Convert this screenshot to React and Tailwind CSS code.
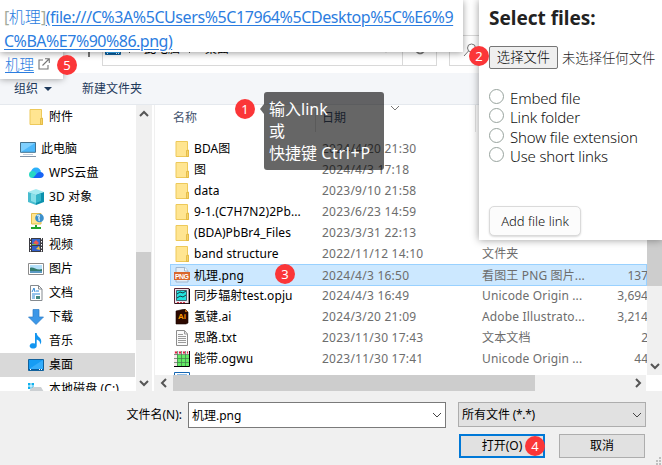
import React from "react";

const svgProps = { width: 16, height: 16, viewBox: "0 0 16 16", className: "block shrink-0" };

function FolderIcon() {
  return (
    <svg {...svgProps}>
      <path d="M2 0.5h11.500v8.500h1v6.500H2z" fill="#ffe591" stroke="#edc95a" />
      <path d="M12.500 9.500h2v6h-2z" fill="#f6d36a" stroke="#dfb63d" strokeWidth=".8" />
    </svg>
  );
}

function ComputerIcon() {
  return (
    <svg {...svgProps}>
      <path d="M.5 1.500h15v9.800H.5z" fill="#4db8fb" stroke="#44728f" />
      <path d="M1 2h14L1 11z" fill="#7fd0ff" />
      <path d="M0 15.500h16" stroke="#8193a8" />
      <path d="M3 13.500h10" stroke="#c3cedb" />
    </svg>
  );
}

function CloudIcon() {
  return (
    <svg {...svgProps}>
      <circle cx="8" cy="7.500" r="5" fill="#2cb0fa" />
      <circle cx="4.500" cy="9.500" r="3.500" fill="#27d8c4" />
      <path d="M4 13c3 0 4-6 8-6 5 0 5 6 0 6z" fill="#1764f5" />
    </svg>
  );
}

function CubeIcon() {
  return (
    <svg {...svgProps}>
      <path d="M0 3 8 0l8 3-8 3z" fill="#a4eaf1" />
      <path d="M0 3l8 3v10l-8-3z" fill="#48bccf" />
      <path d="M16 3 8 6v10l8-3z" fill="#0b91ad" />
      <path d="M3 4.200 8 6v8l-5-2z" fill="#86dfe8" />
      <path d="M8 6l5-1.800V12l-5 2z" fill="#35b5c9" />
    </svg>
  );
}

function NetworkFolderIcon() {
  return (
    <svg {...svgProps}>
      <path d="M3.500.5H13V11H3.500z" fill="#ffe591" stroke="#e3bd4c" />
      <circle cx="11.500" cy="5" r="4.300" fill="#3b8fcb" />
      <path d="M9 3c2-2 3 0 2 1s1 2 0 4" stroke="#c8e6f5" strokeWidth="1.500" fill="none" />
      <path d="M8 12v2M3 15h10" stroke="#22a42c" strokeWidth="2" />
    </svg>
  );
}

function VideoIcon() {
  return (
    <svg {...svgProps}>
      <path d="M1 1h14v14H1z" fill="#3b3b42" />
      <path d="M4 2h8v6H4z" fill="#3769d1" />
      <path d="M4 9h8v5H4z" fill="#315fc9" />
      <path d="m5 6 3-3 3 3-2 2z" fill="#ed5c4c" />
      <path d="m8 12 3-3 1 4z" fill="#f7c23c" />
      <path d="M4 7h4v1H4z" fill="#74ba4c" />
      <path d="M2.500 1v14M13.500 1v14" stroke="#fff" strokeDasharray="1.500 1.500" />
    </svg>
  );
}

function PictureIcon() {
  return (
    <svg {...svgProps}>
      <path d="M.5 2.500h15v11H.5z" fill="#fff" stroke="#8b8b8b" />
      <path d="M2 4h12v8H2z" fill="#b5e0fb" />
      <path d="M2 7c3-2 7 3 12 1v3H2z" fill="#337b6d" />
      <path d="M2 10h12v2H2z" fill="#5b99c2" />
    </svg>
  );
}

function DocumentIcon() {
  return (
    <svg {...svgProps}>
      <path d="M2.500.5h8L14 4v11.500H2.500z" fill="#fff" stroke="#858a8f" />
      <path d="M10.500.5V4H14" fill="none" stroke="#858a8f" />
      <path d="M4 7 6 3l1 4M8 6h3M4 9h8M4 11h3M4 13h3" stroke="#2b88d8" fill="none" />
      <path d="M8 11h4v3H8z" fill="#458a80" />
    </svg>
  );
}

function DownloadIcon() {
  return (
    <svg {...svgProps}>
      <path d="M5 .5h6V8h4.500L8 15.500.5 8H5z" fill="#3b97e8" stroke="#2b7dc5" strokeWidth=".7" />
    </svg>
  );
}

function MusicIcon() {
  return (
    <svg {...svgProps}>
      <path d="M7 0h1.700c0 4 5 4 4.500 9-.1 1-.6 2-1.200 2.500C12.700 8 10 7 8.700 6.500V13A3.500 2.700 0 1 1 7 10.600z" fill="#1395f0" />
    </svg>
  );
}

function DesktopIcon() {
  return (
    <svg {...svgProps}>
      <path d="M.5 2.500h15v11H.5z" fill="#159cf4" stroke="#11619c" />
      <path d="M1 12 15 3v10H1z" fill="#35adfb" />
      <path d="M1 12.500h14" stroke="#075a9c" />
      <path d="M2 12.500h1M11 12.500h3" stroke="#fff" strokeDasharray="1 1" />
    </svg>
  );
}

function DiskIcon() {
  return (
    <svg {...svgProps}>
      <path d="M0 2h2.500v2.500H0zM3.500 2H6v2.500H3.500zM0 5.500h2.500V8H0zM3.500 5.500H6V8H3.500z" fill="#10b1ee" />
      <path d="M2 8.500 5 6h8l3 5v4H1z" fill="#ccd0d3" />
    </svg>
  );
}

function PngIcon() {
  return (
    <svg {...svgProps}>
      <path d="M2 .5h9L14 4v11H2z" fill="#e5eef7" stroke="#9fb6ce" />
      <path d="M10.500.5V4H14" fill="#fff" stroke="#9fb6ce" />
      <path d="M0 5h16v8H0z" fill="#d9662c" />
      <text x="8" y="11.600" textAnchor="middle" textLength="14" fontSize="7" fontWeight="700" fill="#fff" fontFamily="Liberation Sans">PNG</text>
    </svg>
  );
}

function OriginIcon() {
  return (
    <svg {...svgProps}>
      <path d="M.5.5H15v15H.5z" fill="#ece8ee" stroke="#5d2634" />
      <path d="M2.500 2.500h10v10h-10z" fill="#21e2df" stroke="#234" strokeWidth=".7" />
      <path d="m3 6 3-2 3 1 3-2M3 10l3-2 3 1 3-2" stroke="#173b46" fill="none" />
      <path d="M15.500 1v15H1" stroke="#000" fill="none" />
      <path d="M3 14.500h9" stroke="#d8344a" strokeDasharray="2 1" />
    </svg>
  );
}

function IllustratorIcon() {
  return (
    <svg {...svgProps}>
      <path d="M2 2 11 0l3 3v11l-2 1H2z" fill="#2d0900" stroke="#160400" strokeWidth=".6" />
      <path d="m11 0 3 3h-3z" fill="#b96717" />
      <text x="8" y="10" textAnchor="middle" fontSize="8" fontWeight="700" fill="#ff9a00" fontFamily="Liberation Sans">Ai</text>
    </svg>
  );
}

function TextFileIcon() {
  return (
    <svg {...svgProps}>
      <path d="M2.500.5h8L13.500 4v11.500h-11z" fill="#fafafa" stroke="#8c8c8c" />
      <path d="M10.500.5V4h3M4 4.500h5M4 6.500h8M4 8.500h8M4 10.500h8M4 12.500h8" fill="none" stroke="#9a9a9a" />
    </svg>
  );
}

function SheetIcon() {
  return (
    <svg {...svgProps}>
      <path d="M0 0h15v15H0z" fill="#f7e5ed" />
      <path d="M3 4h12v11H3z" fill="#62eb65" />
      <path d="M0 3.500h15M0 7.500h15M0 11.500h15M3.500 0v15M7.500 0v15M11.500 0v15" stroke="#44784c" strokeWidth=".7" />
      <path d="M1 1.500h2M5 1.500h2M9 1.500h2M13 1.500h1" stroke="#e02444" strokeWidth="2" />
      <path d="M15.500 0v15.500H0" stroke="#000" fill="none" />
    </svg>
  );
}

function WindowFileIcon() {
  return (
    <svg {...svgProps}>
      <path d="M.5.5h15v15H.5z" fill="#fff" stroke="#1566b3" />
      <path d="M3 3.500h10" stroke="#1976cb" strokeWidth="2" />
    </svg>
  );
}

function Chevron({ dir = "down", className = "" }) {
  const d = { down: "M2 4l4 4 4-4", up: "M2 8l4-4 4 4", left: "M8 2 4 6l4 4", right: "M4 2l4 4-4 4" }[dir];
  return (
    <svg width="12" height="12" viewBox="0 0 12 12" className={"block shrink-0 " + className}>
      <path d={d} fill="none" stroke="currentColor" strokeWidth="inherit" />
    </svg>
  );
}

function Badge({ n, className }) {
  return (
    <span className={"absolute flex h-5 w-5 items-center justify-center rounded-full bg-[#fb3638] text-[13px] leading-none text-white " + className}>
      {n}
    </span>
  );
}

const places = [
  ["WPS云盘", CloudIcon],
  ["3D 对象", CubeIcon],
  ["电镜", NetworkFolderIcon],
  ["视频", VideoIcon],
  ["图片", PictureIcon],
  ["文档", DocumentIcon],
  ["下载", DownloadIcon],
  ["音乐", MusicIcon],
  ["桌面", DesktopIcon],
  ["本地磁盘 (C:)", DiskIcon],
];

const files = [
  ["BDA图", "2024/4/20 21:30", "", "", FolderIcon],
  ["图", "2024/4/3 17:18", "", "", FolderIcon],
  ["data", "2023/9/10 21:58", "", "", FolderIcon],
  ["9-1.(C7H7N2)2Pb...", "2023/6/23 14:59", "", "", FolderIcon],
  ["(BDA)PbBr4_Files", "2023/3/31 22:13", "", "", FolderIcon],
  ["band structure", "2022/11/12 14:10", "文件夹", "", FolderIcon],
  ["机理.png", "2024/4/3 16:50", "看图王 PNG 图片...", "137", PngIcon],
  ["同步辐射test.opju", "2024/4/3 16:49", "Unicode Origin ...", "3,694", OriginIcon],
  ["氢键.ai", "2024/3/20 21:09", "Adobe Illustrato...", "3,214", IllustratorIcon],
  ["思路.txt", "2023/11/30 17:43", "文本文档", "2", TextFileIcon],
  ["能带.ogwu", "2023/11/30 17:41", "Unicode Origin ...", "44", SheetIcon],
  ["", "", "", "", WindowFileIcon],
];

function TopBar() {
  return (
    <div className="flex h-[73px] shrink-0 items-end bg-white pb-[7px]">
      <div className="mr-3 mb-[9px] ml-[88px] h-3 w-[2px] bg-[#777]" />
      <div className="flex h-[31px] w-[335px] border border-[#d9d9d9]">
        <div className="flex flex-1 items-center pb-[3px] pl-[2px]">
          <DesktopIcon />
          <Chevron dir="right" className="mx-[4px] stroke-1 text-[#555]" />
          <span className="ml-[3px]">此电脑</span>
          <Chevron dir="right" className="mr-[8px] ml-[5px] stroke-1 text-[#555]" />
          <span>桌面</span>
        </div>
        <div className="flex w-[34px] items-center justify-center border-r border-[#d9d9d9] pb-[3px]">
          <Chevron className="stroke-2 text-[#666]" />
        </div>
        <div className="flex w-[33px] items-center justify-center pb-[3px]">
          <svg width="12" height="12" viewBox="0 0 12 12"><path d="M9.500 3a4.500 4.500 0 1 0 1 4" fill="none" stroke="#777" strokeWidth="1.700" /></svg>
        </div>
      </div>
      <div className="ml-3 flex h-[31px] flex-1 items-start border border-[#d9d9d9] pt-[7px] pl-[13px]">
        <svg width="14" height="14" viewBox="0 0 14 14"><circle cx="8.500" cy="5" r="4" fill="none" stroke="#777" /><path d="M5.500 8 1 13" stroke="#777" /></svg>
      </div>
    </div>
  );
}

function Sidebar() {
  return (
    <div className="flex h-full w-[155px] shrink-0 overflow-hidden border-r border-[#f0f0f0]">
      <div className="w-[136px] shrink-0">
        <div className="flex h-6 items-center gap-[5px] pl-7"><FolderIcon /><span>附件</span></div>
        <div className="mt-2 flex h-6 items-center gap-[5px] pl-5"><ComputerIcon /><span>此电脑</span></div>
        {places.map(([name, Icon]) => (
          <div key={name} className={"mr-px flex h-6 items-center gap-[5px] pl-7 whitespace-nowrap " + (name === "桌面" ? "bg-[#d9d9d9]" : "")}>
            <Icon /><span className="tracking-[0.1px]">{name}</span>
          </div>
        ))}
      </div>
      <div className="flex w-4 flex-col items-center bg-[#f0f0f0] pt-[3px] pb-[1px] text-[#555]">
        <Chevron dir="up" className="stroke-2" />
        <div className="mt-[132px] h-[88px] w-[15px] self-start bg-[#cdcdcd]" />
        <Chevron className="mt-[37px] stroke-2" />
      </div>
    </div>
  );
}

function FileList() {
  return (
    <div className="flex min-w-0 flex-1 flex-col">
      <div className="flex min-h-0 flex-1">
        <div className="min-w-0 flex-1 overflow-hidden pl-[15px]">
          <div className="flex h-[33px] text-[#44546f]">
            <div className="h-[27px] w-[146px] border-r border-[#e2e2e2] pt-1 pl-[3px]">名称</div>
            <div className="flex h-[27px] w-[160px] justify-between border-r border-[#e2e2e2] pt-1 pl-[6px]">
              <span>日期</span>
              <Chevron className="-mt-[7px] mr-[74px] stroke-1 text-[#777]" />
            </div>
          </div>
          {files.map(([name, date, type, size, Icon], i) => (
            <div key={i} className={"flex items-center border pl-[3px] leading-[19px] whitespace-nowrap " + (i === 6 ? "-mb-px h-[22px] border-[#99d1ff] bg-[#cce8ff]" : "h-[21px] border-transparent")}>
              <Icon />
              <span className="ml-1 w-[128px] shrink-0 tracking-[0.08px]">{name}</span>
              <span className="w-[160px] shrink-0 tracking-[0.24px] text-[#6d6d6d]">{date}</span>
              <span className="w-[114px] shrink-0 tracking-[0.15px] text-[#6d6d6d]">{type}</span>
              <span className="-mr-[2px] flex-1 text-right text-[#6d6d6d]">{size}</span>
            </div>
          ))}
        </div>
        <div className="flex w-[15px] shrink-0 flex-col items-center bg-[#f0f0f0] text-[#555]">
          <div className="h-[181px] w-full bg-[#cdcdcd]" />
          <Chevron className="mt-[74px] stroke-2" />
        </div>
      </div>
      <div className="flex h-4 shrink-0">
        <div className="flex flex-1 items-center bg-[#f0f0f0] pl-[3px] text-[#555]">
          <Chevron dir="left" className="stroke-2" />
          <div className="mr-auto ml-[3px] h-full w-[362px] bg-[#cdcdcd]" />
          <Chevron dir="right" className="mr-[2px] stroke-2" />
        </div>
        <div className="w-4 bg-white" />
      </div>
    </div>
  );
}

function Footer() {
  return (
    <div className="relative h-[74px] shrink-0 bg-[#f0f0f0] pt-[11px]">
      <div className="flex h-[26px] items-start">
        <span className="w-[182px] pt-[4px] text-right">文件名(N):</span>
        <div className="ml-[6px] flex h-[26px] w-[258px] items-center justify-between border border-[#7a7a7a] bg-white pr-[2px] pl-[3px]">
          <span className="pt-px">机理.png</span>
          <Chevron className="stroke-1 text-[#444]" />
        </div>
        <div className="ml-3 flex h-[25px] w-[188px] items-center justify-between border border-[#adadad] bg-[#e1e1e1] pr-[2px] pl-[3px]">
          <span className="tracking-[-0.35px]"><span className="tracking-normal">所有文件</span> (*.*)</span>
          <Chevron className="stroke-1 text-[#444]" />
        </div>
      </div>
      <div className="mt-[6px] ml-[459px] flex gap-[14px]">
        <button className="h-6 w-[86px] border-2 border-[#0078d7] bg-[#e1e1e1] leading-5">打开(O)</button>
        <button className="h-6 w-[86px] border border-[#adadad] bg-[#e1e1e1] leading-[22px]">取消</button>
      </div>
      <svg width="8" height="8" viewBox="0 0 8 8" className="absolute right-0 bottom-0">
        <path d="M5 0h2v2H5zM5 3h2v2H5zM5 6h2v2H5zM2 3h2v2H2zM2 6h2v2H2z" fill="#bfbfbf" />
      </svg>
    </div>
  );
}

function SelectPanel() {
  return (
    <div className="absolute top-0 left-[479px] h-[240px] w-[183px] bg-white pl-[10px] text-[#222] shadow-[0_0_8px_rgba(0,0,0,0.4)]">
      <h2 className="h-[46px] pt-[5px] text-[19px] leading-[26px] font-bold whitespace-nowrap">Select files:</h2>
      <div className="flex items-center gap-1 text-[13.330px] font-light whitespace-nowrap">
        <button className="h-[23px] w-[69px] rounded-[2px] border border-[#767676] bg-[#efefef] leading-[21px] text-black">选择文件</button>
        <span>未选择任何文件</span>
      </div>
      <div className="mt-[19px] text-[15px] leading-[19px] font-light tracking-[-0.150px] text-[#111]">
        {["Embed file", "Link folder", "Show file extension", "Use short links"].map((t) => (
          <label key={t} className="flex h-[19.400px] whitespace-nowrap">
            <span className="mt-[1px] mr-[6px] h-[15px] w-[15px] rounded-full border border-[#98a39e] bg-white" />
            <span className="mt-[1px]">{t}</span>
          </label>
        ))}
      </div>
      <button className="mt-[40px] h-[30px] w-[92px] rounded-[5px] border border-[#dadada] bg-[#fcfcfc] text-[13px] font-light text-[#111] shadow-[0_1px_2px_rgba(0,0,0,0.15)]">Add file link</button>
    </div>
  );
}

export default function App() {
  return (
    <div className="relative flex h-[465px] w-[662px] flex-col overflow-hidden bg-white font-['Noto_Sans','Noto_Sans_CJK_SC',sans-serif] text-[12px] leading-[18px] text-black">
      <TopBar />
      <div className="flex h-8 shrink-0 items-center border-b border-[#e5e9ee] bg-[#f4f6f9] pl-[14px] text-[#1e395b]">
        <span>组织</span>
        <svg width="8" height="4" viewBox="0 0 8 4" className="ml-[6px]"><path d="M0 0h8L4 4z" fill="#1e395b" /></svg>
        <span className="ml-[30px]">新建文件夹</span>
      </div>
      <div className="flex h-[286px] shrink-0">
        <Sidebar />
        <FileList />
      </div>
      <Footer />

      <div className="absolute top-[50px] left-0 flex h-[29px] w-[63px] items-center gap-1 bg-white pl-[5px] text-[14.500px] shadow-[0_0_7px_rgba(0,0,0,0.4)]">
        <span className="-mt-[2px] font-light text-[#2b7de0] underline underline-offset-2">机理</span>
        <svg width="12" height="12" viewBox="0 0 12 12" className="-mt-px"><path d="M5 2H1v9h9V7M7 .7h4.300V5M11 1 4.500 7.500" fill="none" stroke="#777" strokeWidth="1.100" /></svg>
      </div>
      <div className="absolute top-0 left-0 h-[52px] w-[463px] bg-white pt-[5px] pl-[4px] text-[16px] leading-6 tracking-[-0.420px] whitespace-nowrap text-[#2b7de0] shadow-[0_1px_7px_rgba(0,0,0,0.4)]">
        <div><span className="text-[#a3ab9c]">[</span><span className="font-light tracking-normal">机理</span><span className="text-[#a3ab9c]">]</span><span className="underline underline-offset-2">(file:///C%3A%5CUsers%5C17964%5CDesktop%5C%E6%9</span></div>
        <div><span className="tracking-[-0.500px] underline underline-offset-2">C%BA%E7%90%86.png)</span></div>
      </div>
      <SelectPanel />

      <div className="absolute top-[92px] left-[264px] h-[78px] w-[120px] rounded-[3px] bg-black/60 pt-[6px] pl-[5px] text-[16px] leading-[22px] whitespace-nowrap text-white">
        <div className="absolute top-[12px] -left-[4px] border-y-[5px] border-r-4 border-y-transparent border-r-black/60" />
        <div>输入link</div>
        <div>或</div>
        <div>快捷键 <span className="tracking-[0.700px]">Ctrl+P</span></div>
      </div>

      <Badge n="1" className="top-[99px] left-[235px]" />
      <Badge n="2" className="top-[46px] left-[469px]" />
      <Badge n="3" className="top-[264px] left-[275px]" />
      <Badge n="4" className="top-[436px] left-[525px]" />
      <Badge n="5" className="top-[55px] left-[57px]" />
    </div>
  );
}
